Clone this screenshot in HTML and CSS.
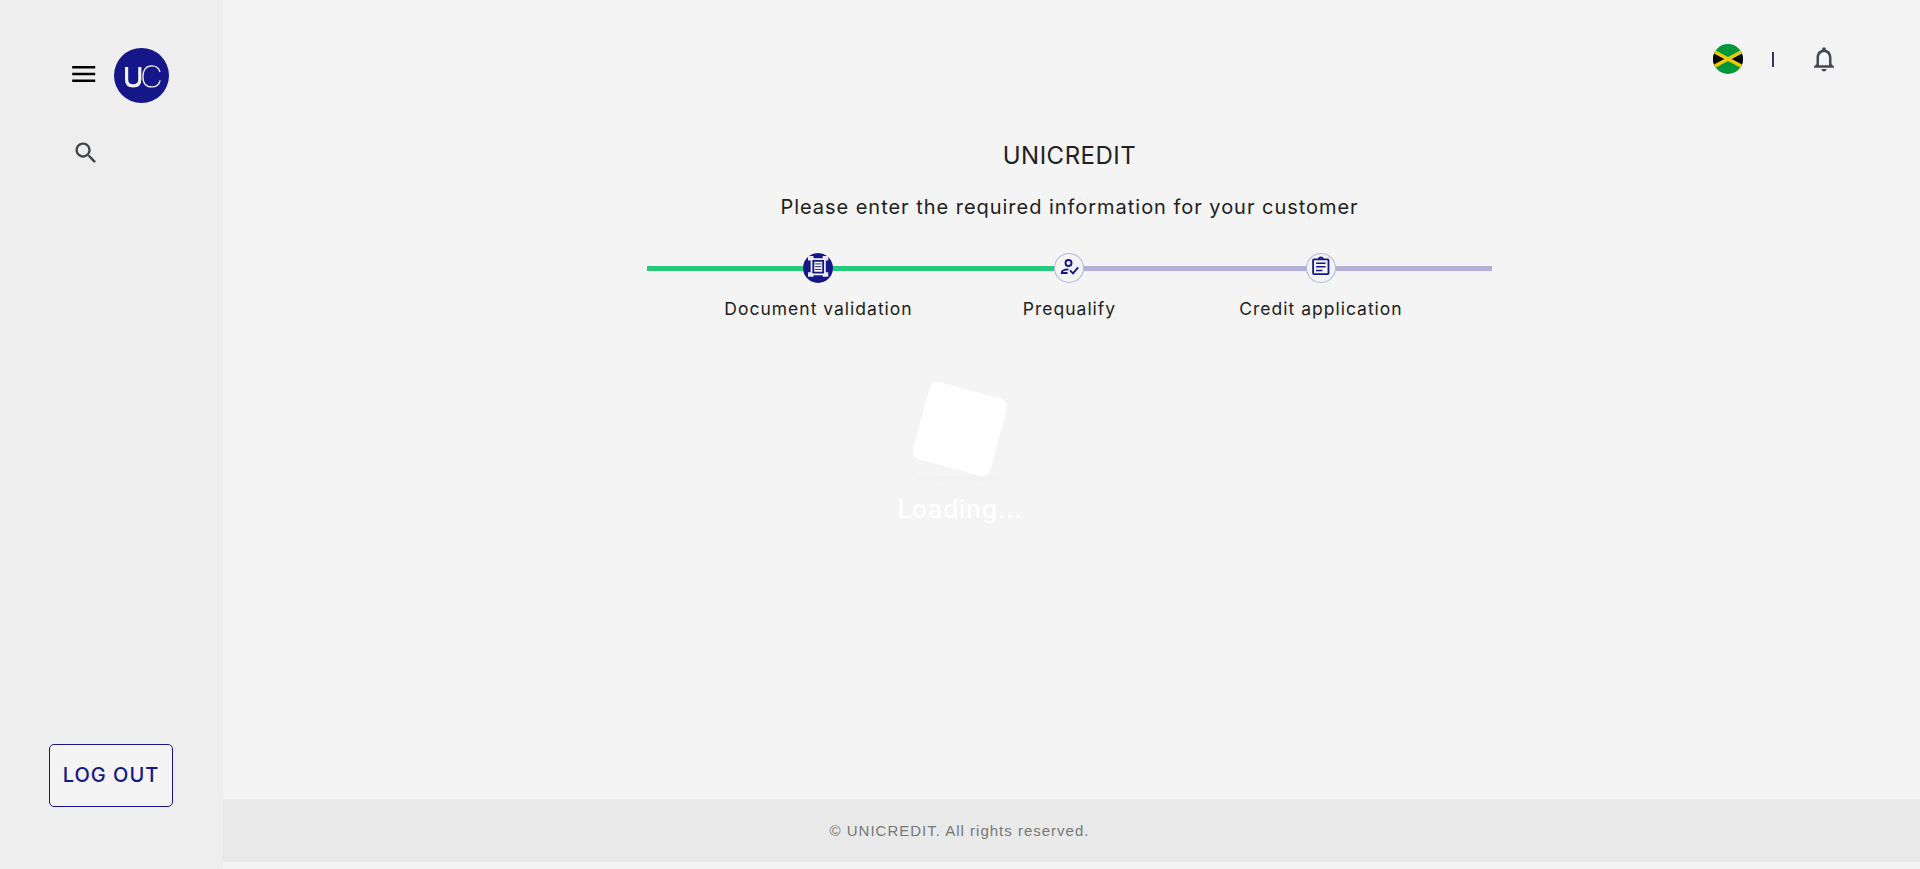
FILE: index.html
```html
<!DOCTYPE html>
<html lang="en">
<head>
<meta charset="utf-8">
<title>UNICREDIT</title>
<link rel="stylesheet" href="styles.css">
</head>
<body>
<div class="app">
  <aside class="sidebar">
    <div class="brand">
      <svg class="menu" viewBox="0 0 24 16"><path d="M.2 0h23v2.600H.2zM.2 6.700h23v2.600H.2zM.2 13.400h23V16H.2z"/></svg>
      <svg class="logo" viewBox="0 0 55 55"><circle cx="27.5" cy="27.5" r="27.5" fill="#151788"/><path d="M12.600 18.900v12.500q0 6.400 6.600 6.400t6.600-6.400V18.900" fill="none" stroke="#f3f3f3" stroke-width="3.200"/><path d="M46 24Q44.500 17.800 37.800 17.800C31.800 17.800 28.900 22.300 28.900 28.400S31.800 38.900 37.800 38.900Q44.800 38.900 46.100 32.300" fill="none" stroke="#f3f3f3" stroke-width="1.300"/></svg>
    </div>
    <svg class="search" viewBox="0 0 24 24"><path d="M15.5 14h-.79l-.28-.27C15.410 12.590 16 11.110 16 9.500 16 5.910 13.090 3 9.500 3S3 5.910 3 9.500 5.910 16 9.500 16c1.610 0 3.090-.59 4.230-1.570l.27.28v.79l5 4.990L20.490 19l-4.990-5zm-6 0C7.010 14 5 11.990 5 9.500S7.010 5 9.500 5 14 7.010 14 9.500 11.990 14 9.500 14z"/></svg>
    <button class="logout">LOG OUT</button>
  </aside>
  <div class="content">
    <header class="topbar">
      <svg class="flag" viewBox="0 0 30 30"><defs><clipPath id="round"><circle cx="15" cy="15" r="15"/></clipPath></defs><g clip-path="url(#round)"><path fill="#009639" d="M0 0h30v30H0z"/><path d="M-1 6.500 15 15-1 23.500zM31 6.500 15 15 31 23.500z"/><path d="M-2 6 32 24M-2 24 32 6" stroke="#eccb08" stroke-width="3.600"/></g></svg>
      <span class="divider"></span>
      <svg class="bell" viewBox="0 0 24 24"><path d="M12 22c1.100 0 2-.9 2-2h-4c0 1.100.9 2 2 2zm6-6v-5c0-3.070-1.630-5.640-4.500-6.320V4c0-.83-.67-1.500-1.500-1.500s-1.500.67-1.500 1.500v.68C7.640 5.360 6 7.920 6 11v5l-2 2v1h16v-1l-2-2zm-2 1H8v-6c0-2.480 1.510-4.500 4-4.500s4 2.020 4 4.500v6z"/></svg>
    </header>
    <main class="main">
      <h1 class="title">UNICREDIT</h1>
      <p class="subtitle">Please enter the required information for your customer</p>
      <ol class="stepper">
        <li class="step first">
          <div class="track"><i class="line done"></i><span class="dot active"><svg viewBox="0 0 30 30"><path fill="#e8e8f4" d="M5 3h5.500v4.500H5zM19.700 3h5.500v4.500h-5.500zM5 19.200h5.500v4.500H5zM19.700 19.200h5.500v4.500h-5.500z"/><rect x="8.500" y="6.200" width="13.400" height="15.200" rx=".5" fill="#151788" stroke="#f3f3f3" stroke-width="1.700"/><path fill="#f3f3f3" d="M11.300 8.700h7.900v10h-7.900z"/><path stroke="#151788" stroke-width=".9" d="M12.200 10.900h6.100M12.200 13.700h6.100M12.200 16.500h6.100"/></svg></span><i class="line done"></i></div>
          <span class="label">Document validation</span>
        </li>
        <li class="step middle">
          <div class="track"><i class="line done"></i><span class="dot"><svg viewBox="0 0 30 30" fill="none" stroke="#151788" stroke-width="1.900"><circle cx="14.500" cy="10" r="3"/><path d="M14.500 16.400q-6.700.3-6.700 3V20h5.700M16 17.400l3 3L24.200 14.300"/></svg></span><i class="line"></i></div>
          <span class="label">Prequalify</span>
        </li>
        <li class="step last">
          <div class="track"><i class="line"></i><span class="dot"><svg viewBox="0 0 30 30" fill="none" stroke="#151788" stroke-width="1.800"><rect x="7.100" y="6.300" width="15.400" height="14.800" rx=".8"/><path stroke-width="1.600" d="M10.100 10.200h9.400M10.100 13.700h9.400M10.100 17.500h6.300"/><path stroke-width="1.400" d="M12.500 6.300q.2-2 2.300-2t2.300 2z"/></svg></span><i class="line"></i></div>
          <span class="label">Credit application</span>
        </li>
      </ol>
    </main>
    <footer class="footer">© UNICREDIT. All rights reserved.</footer>
  </div>
</div>
<div class="loader"><div class="box"></div><div class="shadow"></div><span class="loading">Loading...</span></div>
</body>
</html>
```
FILE: styles.css
```css
* { box-sizing: border-box; }
body { margin: 0; background: #f4f4f4; color: #212121; font-family: Inter, "Liberation Sans", sans-serif; overflow: hidden; }
svg { display: block; }
.app { display: flex; height: 869px; }
.sidebar { width: 223px; flex: none; background: #eee; padding: 48px 49px 62px; display: flex; flex-direction: column; align-items: flex-start; }
.brand { display: flex; align-items: center; gap: 18px; padding-left: 23px; }
.menu { width: 24px; height: 16px; margin-top: -3px; }
.logo { width: 55px; height: 55px; }
.search { width: 28px; height: 28px; margin: 36px 0 0 23.2px; fill: #3f4448; }
.logout { margin-top: auto; width: 124px; height: 63px; padding: 0 0 2px; border: 1px solid #151788; border-radius: 5px; background: #f4f4f4; color: #151788; font: 500 20px Inter, sans-serif; letter-spacing: 1px; }
.content { flex: 1; display: flex; flex-direction: column; padding-bottom: 7px; }
.topbar { display: flex; justify-content: flex-end; align-items: center; height: 118px; padding-right: 81px; }
.flag { width: 30px; height: 30px; }
.divider { width: 2px; height: 15px; background: #34365f; margin: 0 35px 0 29px; }
.bell { width: 30px; height: 30px; fill: #444a4f; }
.main { flex: 1; width: 845px; margin-left: 424px; display: flex; flex-direction: column; }
.title { margin: 23px 0 0; text-align: center; font-size: 24px; font-weight: 400; line-height: 30px; letter-spacing: .5px; }
.subtitle { margin: 21px 0 0; text-align: center; font-size: 20px; line-height: 30px; letter-spacing: .97px; white-space: nowrap; }
.stepper { list-style: none; margin: 31px 0 0; padding: 0; display: flex; }
.step { width: 251px; display: flex; flex-direction: column; align-items: center; }
.first { width: 296px; }
.last { width: 298px; }
.first .line:first-child { flex: 0 0 156px; }
.last .line:last-child { flex: 0 0 156px; }
.track { display: flex; align-items: center; align-self: stretch; }
.line { flex: 1; height: 5px; background: #b1b0d7; }
.done { background: #27c97b; }
.dot { flex: none; width: 30px; height: 30px; border-radius: 50%; box-shadow: inset 0 0 0 1px #b1b0d7; }
.active { background: #151788; box-shadow: none; }
.label { margin-top: 13px; font-size: 17.500px; line-height: 26px; letter-spacing: 1px; white-space: nowrap; }
.first .label { padding-left: 47px; }
.middle .label { padding-left: 2px; }
.last .label { padding-right: 44px; }
.footer { height: 63px; padding-left: 606.5px; background: #e9e9e9; color: #777; font: 15px/63px "Liberation Sans", sans-serif; letter-spacing: 1px; }
.loader { position: absolute; left: 860px; top: 388.5px; width: 200px; display: flex; flex-direction: column; align-items: center; color: #fff; }
.box { width: 80px; height: 80px; border-radius: 8px; background: #fff; transform: rotate(15deg); }
.shadow { width: 88px; height: 5px; margin-top: 7px; border-radius: 50%; background: #f1f1f1; }
.loading { margin-top: 12.5px; font-size: 25px; line-height: 32px; font-weight: 500; letter-spacing: .7px; }
```
